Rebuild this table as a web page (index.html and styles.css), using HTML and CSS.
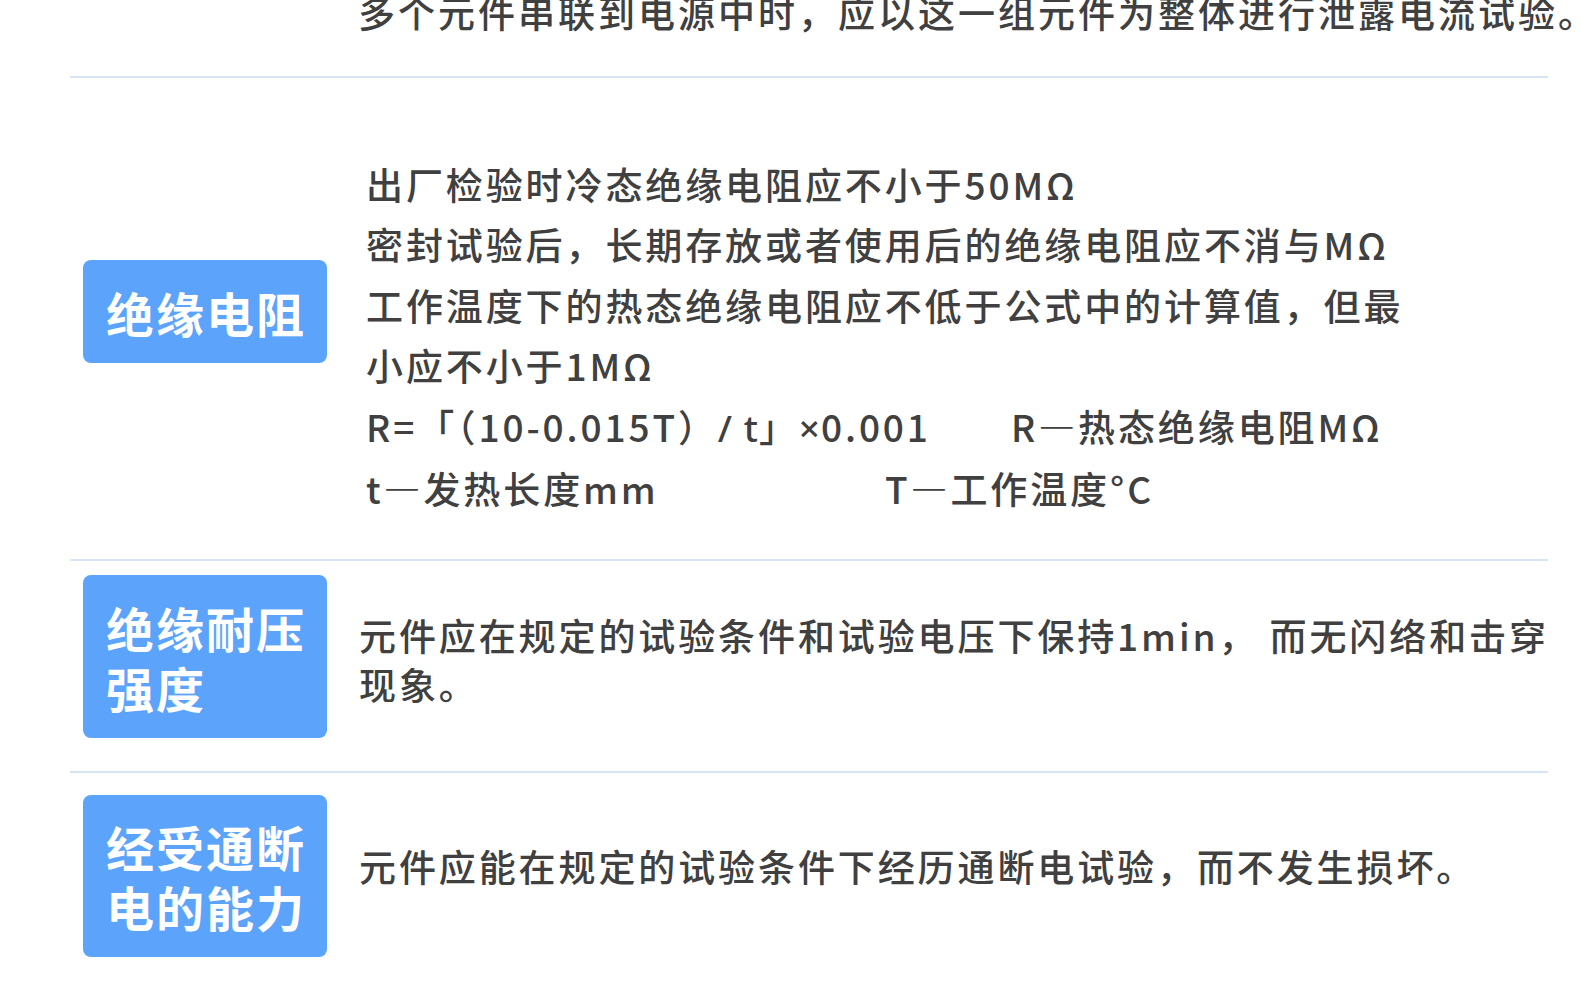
FILE: index.html
```html
<!DOCTYPE html>
<html lang="zh-CN">
<head>
<meta charset="utf-8">
<title>元件试验要求</title>
<link rel="stylesheet" href="styles.css">
</head>
<body>
<div class="page">
  <div class="intro">
    <p class="intro-text">多个元件串联到电源中时，应以这一组元件为整体进行泄露电流试验。</p>
  </div>

  <section class="row row-1">
    <div class="badge badge-1"><span class="badge-text">绝缘电阻</span></div>
    <div class="desc desc-1">
      <div class="line">出厂检验时冷态绝缘电阻应不小于50MΩ</div>
      <div class="line">密封试验后，长期存放或者使用后的绝缘电阻应不消与MΩ</div>
      <div class="line">工作温度下的热态绝缘电阻应不低于公式中的计算值，但最</div>
      <div class="line">小应不小于1MΩ</div>
      <div class="line"><span class="col col-formula">R=「（10-0.015T）<span class="lat">/ t</span>」<span class="lat">×</span>0.001</span><span>R—热态绝缘电阻MΩ</span></div>
      <div class="line"><span class="col col-t">t—发热长度mm</span><span>T—工作温度°C</span></div>
    </div>
  </section>

  <section class="row row-2">
    <div class="badge badge-tall"><span class="badge-text">绝缘耐压<br>强度</span></div>
    <div class="desc desc-2">元件应在规定的试验条件和试验电压下保持1min， 而无闪络和击穿<br>现象。</div>
  </section>

  <section class="row row-3">
    <div class="badge badge-tall badge-3"><span class="badge-text">经受通断<br>电的能力</span></div>
    <div class="desc desc-3">元件应能在规定的试验条件下经历通断电试验，而不发生损坏。</div>
  </section>
</div>
</body>
</html>
```

FILE: styles.css
```css
html, body {
  margin: 0;
  padding: 0;
  background: #ffffff;
}

body {
  width: 1580px;
  height: 1000px;
  overflow: hidden;
  font-family: "Noto Sans CJK SC", "Noto Sans", sans-serif;
  color: #404040;
}

.page {
  margin-left: 70px;
  width: 1478px;
}

.intro {
  margin-top: -13px;
  padding-left: 288px;
  padding-bottom: 39px;
  border-bottom: 2px solid #d8e3f4;
}

.intro-text {
  margin: 0;
  font-size: 37px;
  line-height: 50px;
  letter-spacing: 3px;
  font-weight: 500;
  white-space: nowrap;
}

.row {
  display: flex;
  border-bottom: 2px solid #d8e3f4;
}

.row-1 {
  align-items: flex-start;
  padding-top: 78px;
  padding-bottom: 41px;
}

.row-2 {
  align-items: center;
  padding-top: 14px;
  padding-bottom: 33px;
}

.row-3 {
  align-items: center;
  padding-top: 22px;
  padding-bottom: 30px;
  border-bottom: none;
}

.badge {
  flex: 0 0 244px;
  width: 244px;
  margin-left: 13px;
  background: #5ba3fb;
  border-radius: 8px;
  display: flex;
  align-items: center;
  justify-content: center;
  color: #ffffff;
}

.badge-1 {
  height: 103px;
  margin-top: 104px;
}

.badge-tall {
  height: 163px;
}

.badge-3 {
  height: 162px;
}

.badge-text {
  display: block;
  text-align: left;
  font-size: 48px;
  line-height: 60px;
  font-weight: 700;
  letter-spacing: 2px;
  margin-left: 2px;
}

.desc {
  margin-left: 32px;
  font-size: 37px;
  font-weight: 500;
  letter-spacing: 2.9px;
  white-space: nowrap;
}

.desc-1 {
  padding-left: 7px;
  margin-top: -2px;
  line-height: 60.4px;
}

.desc-2 {
  line-height: 49px;
  margin-top: 6px;
}

.desc-3 {
  line-height: 50px;
  margin-bottom: 20px;
}

.lat {
  font-family: "Noto Sans", "Open Sans", sans-serif;
  letter-spacing: 1px;
}

.col {
  display: inline-block;
}

.col-formula {
  width: 645px;
}

.col-t {
  width: 519px;
}
```
